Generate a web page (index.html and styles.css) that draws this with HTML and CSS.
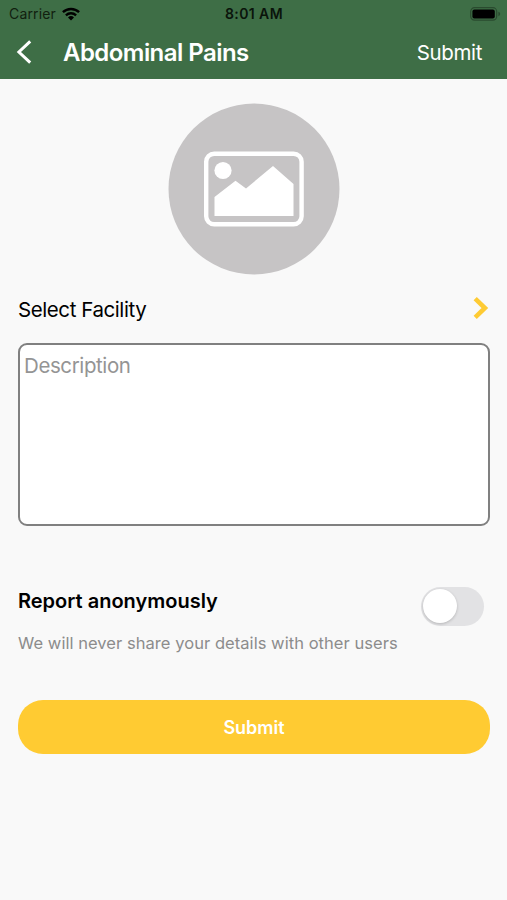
FILE: index.html
```html
<!DOCTYPE html>
<html lang="en">
<head>
<meta charset="utf-8">
<title>Abdominal Pains</title>
<link rel="stylesheet" href="styles.css">
</head>
<body>
<header class="header">
  <div class="status">
    <div class="carrier"><span class="carrier-name">Carrier</span>
      <svg class="wifi" width="18" height="14" viewBox="0 0 18 14" fill="none" stroke="#000" stroke-width="2.4"><path d="M.9 5.2a11.7 11.7 0 0 1 16.2 0M3.9 8.3a7.5 7.5 0 0 1 10.2 0"/><path d="M6 10.4a4.5 4.5 0 0 1 6 0l-3 3.1z" fill="#000" stroke="none"/></svg>
    </div>
    <span class="time">8:01 AM</span>
    <svg class="battery" width="31" height="14" viewBox="0 0 31 14"><rect x=".7" y=".7" width="26" height="12.4" rx="3.8" fill="none" stroke="#2a4b2f" stroke-width="1.2"/><rect x="2.4" y="2.4" width="22.4" height="9" rx="2" fill="#000"/><path d="M28.4 4.8q1.8.6 1.8 2.2t-1.8 2.2z" fill="#2a4b2f"/></svg>
  </div>
  <nav class="nav">
    <svg class="back" width="16" height="24" viewBox="0 0 16 24" fill="none" stroke="#fff" stroke-width="3"><path d="M14.2 1.3 2.9 12l11.3 10.7"/></svg>
    <h1 class="title">Abdominal Pains</h1>
    <span class="action">Submit</span>
  </nav>
</header>
<main class="form">
  <svg class="photo" width="172" height="172" viewBox="0 0 172 172">
    <circle cx="86" cy="86" r="85.5" fill="#c6c4c5"/>
    <rect x="38.2" y="50.7" width="95.4" height="70.6" rx="8" fill="none" stroke="#fff" stroke-width="4.4"/>
    <circle cx="55" cy="67.5" r="8.6" fill="#fff"/>
    <path d="M46.5 113V94l21-16.2L78 85.5 105 63l20.5 18v32z" fill="#fff"/>
  </svg>
  <div class="facility">
    <span class="facility-label">Select Facility</span>
    <svg class="chevron" width="16" height="24" viewBox="0 0 16 24" fill="none" stroke="#fecb34" stroke-width="4.6"><path d="M2.2 2.6 11.9 12l-9.7 9.4"/></svg>
  </div>
  <div class="description"><span class="placeholder">Description</span></div>
  <div class="anonymous">
    <div class="anonymous-text">
      <span class="anonymous-label">Report anonymously</span>
      <span class="hint">We will never share your details with other users</span>
    </div>
    <div class="toggle"><div class="knob"></div></div>
  </div>
  <div class="submit"><span class="submit-label">Submit</span></div>
</main>
</body>
</html>
```
FILE: styles.css
```css
* { box-sizing: border-box; }
body {
  margin: 0;
  min-height: 900px;
  background: #f9f9f9;
  color: #000;
  font-family: Inter, "Liberation Sans", sans-serif;
}
svg { display: block; flex: none; }
span, h1 { white-space: nowrap; }
.header { height: 79px; background: #3e6e46; }
.status {
  display: grid;
  grid-template-columns: 1fr auto 1fr;
  align-items: center;
  height: 27px;
  padding: 0 8px 0 9px;
}
.carrier { display: flex; align-items: center; gap: 6px; color: #11200f; }
.carrier-name { font-size: 14px; letter-spacing: 0.15px; }
.time { font-size: 14px; font-weight: 600; letter-spacing: 0.4px; color: #0a140b; }
.battery { justify-self: end; margin-right: -2px; }
.nav { display: flex; align-items: center; height: 50px; padding: 0 25px 0 16px; color: #fff; }
.title { margin: 0 auto 0 31px; font-size: 24px; font-weight: 600; letter-spacing: -0.55px; }
.action { margin-top: 1px; font-size: 20.5px; letter-spacing: -0.35px; }
.form { display: flex; flex-direction: column; padding: 24px 17px 0 18px; }
.photo { align-self: center; }
.facility { display: flex; align-items: center; justify-content: space-between; height: 68px; }
.facility-label { margin-top: 1px; font-size: 20.5px; letter-spacing: -0.42px; }
.chevron { margin: 0 1px 2px 0; }
.description {
  height: 183px;
  padding: 9px 4px;
  border: 2px solid #808080;
  border-radius: 9px;
  background: #fff;
}
.placeholder { display: block; font-size: 20.5px; line-height: 24px; letter-spacing: -0.4px; color: #949494; }
.anonymous { display: flex; justify-content: space-between; height: 174px; padding: 61px 6px 0 0; }
.anonymous-text { display: flex; flex-direction: column; gap: 16px; }
.anonymous-label { font-size: 20px; line-height: 29px; font-weight: 600; }
.hint { font-size: 16.5px; line-height: 23px; letter-spacing: 0.05px; color: #8c8c8c; }
.toggle { width: 63px; height: 39px; padding: 2px; border-radius: 20px; background: #e2e2e4; }
.knob { width: 34px; height: 34px; border-radius: 50%; background: #fff; box-shadow: 0 1px 3px #0003; }
.submit {
  display: flex;
  align-items: center;
  justify-content: center;
  height: 54px;
  border-radius: 25px;
  background: #ffcb32;
  color: #fff;
}
.submit-label { font-size: 18px; font-weight: 600; }
```
